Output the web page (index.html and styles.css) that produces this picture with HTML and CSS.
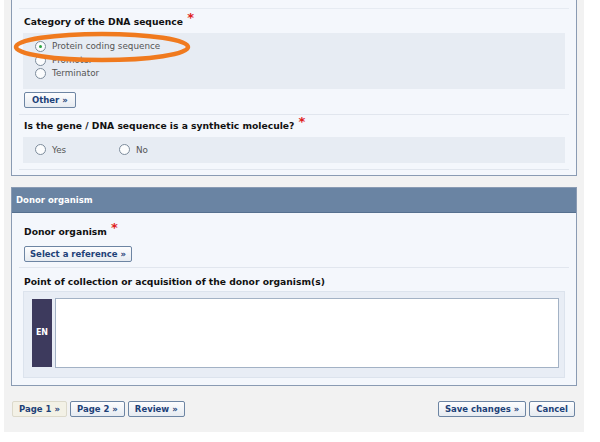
FILE: index.html
```html
<!DOCTYPE html>
<html>
<head>
<meta charset="utf-8">
<link rel="stylesheet" href="styles.css">
</head>
<body>
<div class="page">
  <section class="panel panel-top">
    <div class="field field-first">
      <div class="label">Category of the DNA sequence <span class="req">*</span></div>
      <div class="options options-stack">
        <div class="opt"><span class="radio checked"></span>Protein coding sequence</div>
        <div class="opt"><span class="radio"></span>Promoter</div>
        <div class="opt"><span class="radio"></span>Terminator</div>
      </div>
      <button class="btn btn-other">Other »</button>
    </div>
    <div class="field">
      <div class="label">Is the gene / DNA sequence is a synthetic molecule? <span class="req">*</span></div>
      <div class="options options-row">
        <div class="opt"><span class="radio"></span>Yes</div>
        <div class="opt"><span class="radio"></span>No</div>
      </div>
    </div>
    <svg class="highlight" width="178" height="32" viewBox="0 0 178 32">
      <ellipse cx="89" cy="16" rx="86" ry="13" fill="none" stroke="#f07a1e" stroke-width="4.5"/>
    </svg>
  </section>

  <section class="panel panel-donor">
    <h2 class="panel-head">Donor organism</h2>
    <div class="field field-first">
      <div class="label">Donor organism <span class="req">*</span></div>
      <button class="btn btn-ref">Select a reference »</button>
    </div>
    <div class="field field-last">
      <div class="label">Point of collection or acquisition of the donor organism(s)</div>
      <div class="textbox">
        <div class="lang">EN</div>
        <div class="textarea"></div>
      </div>
    </div>
  </section>

  <div class="actions">
    <div class="nav">
      <button class="btn btn-current">Page 1 »</button>
      <button class="btn">Page 2 »</button>
      <button class="btn">Review »</button>
    </div>
    <div class="nav">
      <button class="btn">Save changes »</button>
      <button class="btn">Cancel</button>
    </div>
  </div>
</div>
</body>
</html>
```

FILE: styles.css
```css
html, body {
  margin: 0;
  padding: 0;
  background: #ffffff;
}

body {
  font-family: "DejaVu Sans", Verdana, sans-serif;
  color: #111;
}

.page {
  width: 580px;
  box-sizing: border-box;
  margin: -12px 0 0 4px;
  padding: 0 7px 15px;
  background: #f2f2f2;
}

.panel {
  position: relative;
  border: 1px solid #8a9bb3;
  background: #f4f7fc;
}

.panel-top {
  padding-bottom: 5px;
}

.panel-donor {
  margin-top: 11px;
  padding-bottom: 7px;
}

.field {
  margin: 0 7px;
  padding: 3px 4px 6px;
  border-bottom: 1px solid #e1e6ee;
}

.panel-top .field-first {
  margin-top: 19px;
  border-top: 1px solid #e6ebf2;
  padding-top: 5px;
}

.panel-donor .field-first {
  margin-top: 5px;
  padding-top: 6px;
  padding-bottom: 5px;
}

.panel-donor .field-last {
  padding-top: 7px;
}

.field-last {
  border-bottom: none;
  padding-bottom: 0;
}

.label {
  font-weight: bold;
  font-size: 9.2px;
  line-height: 14px;
  padding-left: 1px;
  white-space: nowrap;
}

.req {
  color: #e02020;
  font-size: 13px;
  position: relative;
  top: -3px;
  margin-left: 1px;
}

.options {
  margin-top: 4px;
  background: #e7ecf3;
  font-size: 8.8px;
  color: #555;
}

.options-stack {
  padding: 7px 12px 8px;
  line-height: 13.5px;
}

.options-row {
  display: flex;
  padding: 6px 12px 6px;
  line-height: 14px;
}

.options-row .opt {
  width: 84px;
}

.opt {
  display: flex;
  align-items: center;
}

.radio {
  width: 9px;
  height: 9px;
  border: 1px solid #7d8c9c;
  border-radius: 50%;
  background: #fbfcfd;
  margin-right: 6px;
  display: inline-flex;
  align-items: center;
  justify-content: center;
  flex: none;
}

.radio.checked::after {
  content: "";
  width: 3px;
  height: 3px;
  border-radius: 50%;
  background: #2aa640;
}

.btn {
  display: block;
  white-space: nowrap;
  font-family: "DejaVu Sans", Verdana, sans-serif;
  font-weight: bold;
  font-size: 8.5px;
  color: #1d4178;
  height: 16px;
  line-height: 14px;
  padding: 0 6px;
  border: 1px solid #6d85a3;
  border-radius: 2px;
  background: linear-gradient(#fdfdfe, #e6ebf1);
  cursor: pointer;
}

.btn-other {
  margin-top: 3px;
  margin-left: 1px;
  padding: 0 7px;
}

.btn-ref {
  margin-top: 7px;
  margin-left: 1px;
  padding: 0 5px;
}

.btn-current {
  background: #f3f1e6;
  border-color: #dcd9cb;
}

.highlight {
  position: absolute;
  left: 1px;
  top: 42px;
}

.panel-head {
  margin: 0;
  height: 24px;
  line-height: 24px;
  padding-left: 4px;
  background: #6a84a3;
  border-bottom: 1px solid #56708f;
  color: #fff;
  font-size: 8.5px;
  font-weight: bold;
}

.textbox {
  margin-top: 2px;
  display: flex;
  background: #e8edf5;
  border: 1px solid #dce3ed;
  padding: 6px 5px 9px 8px;
}

.lang {
  width: 20px;
  height: 68px;
  margin-top: 1px;
  background: #3d3a5d;
  color: #fff;
  font-size: 8px;
  font-weight: bold;
  display: flex;
  align-items: center;
  justify-content: center;
  margin-right: 3px;
}

.textarea {
  flex: 1;
  height: 68px;
  background: #fff;
  border: 1px solid #a3b2c5;
}

.actions {
  display: flex;
  justify-content: space-between;
  margin-top: 15px;
  padding: 0 2px 0 1px;
}

.nav {
  display: flex;
  gap: 3px;
}
```
